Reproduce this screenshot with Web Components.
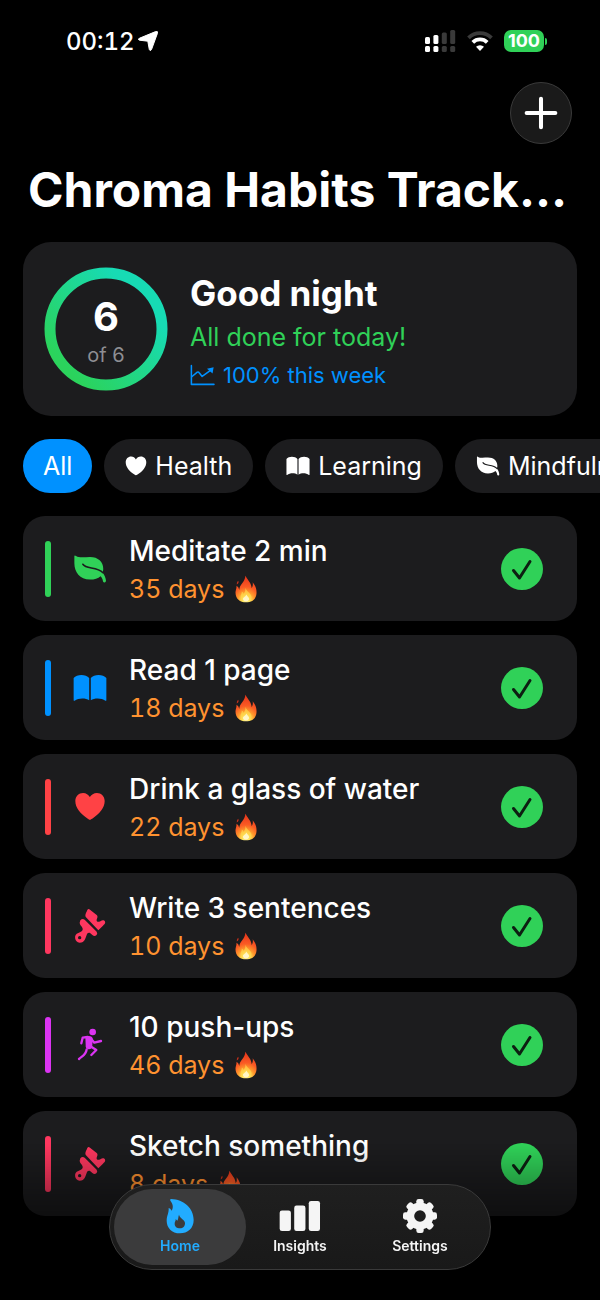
<!DOCTYPE html>
<html lang="en">
<head>
<meta charset="utf-8">
<meta name="viewport" content="width=device-width, initial-scale=1">
<title>Chroma Habits Tracker</title>
<style>
  body {
    margin: 0;
    background: #000;
    color: #fff;
    font-family: Inter, "Liberation Sans", sans-serif;
    --card: #1c1c1e;
    --green: #30d158;
    --blue: #0091ff;
    --orange: #ff9230;
  }
</style>
</head>
<body>
<habits-app>
  <status-bar slot="status" time="00:12" battery="100"></status-bar>
  <summary-card done="6" total="6">
    <span slot="greeting">Good night</span>
    <span slot="message">All done for today!</span>
    <span slot="week">100% this week</span>
  </summary-card>
  <filter-bar>
    <filter-chip active>All</filter-chip>
    <filter-chip icon="heart">Health</filter-chip>
    <filter-chip icon="book">Learning</filter-chip>
    <filter-chip icon="leaf">Mindfulness</filter-chip>
  </filter-bar>
  <habit-list>
    <habit-row icon="leaf" color="#30d158" days="35">Meditate 2 min</habit-row>
    <habit-row icon="book" color="#0091ff" days="18">Read 1 page</habit-row>
    <habit-row icon="heart" color="#ff4245" days="22">Drink a glass of water</habit-row>
    <habit-row icon="brush" color="#ff375f" days="10">Write 3 sentences</habit-row>
    <habit-row icon="runner" color="#db34f2" days="46">10 push-ups</habit-row>
    <habit-row icon="brush" color="#ff375f" days="8">Sketch something</habit-row>
  </habit-list>
  <tab-bar slot="tabs">
    <tab-item icon="flame" active>Home</tab-item>
    <tab-item icon="bars">Insights</tab-item>
    <tab-item icon="gear">Settings</tab-item>
  </tab-bar>
</habits-app>

<script>
const tooth = (a) => `<rect x="-11" y="-51" width="22" height="26" rx="7" transform="rotate(${a})"/>`;

// each icon: viewBox and content, filled with currentColor
const ICONS = {
  leaf: ["158 134 100 86", `
    <path d="M162 139C162 136 165 137 167 139C176 145 192 142 208 142C232 142 247 156 247 177C247 181 246 184 245 187C251 194 254 203 255 211C255 218 247 218 246 212C245 206 243 202 239 198C232 205 221 208 208 208C178 208 162 186 162 160Z"/>
    <path d="M187 163C197 179 228 168 246 188" fill="none" stroke="var(--card)" stroke-width="4.5" stroke-linecap="round"/>`],
  book: ["158 490 105 88", `
    <path d="M160 503C170 491 198 491 208 503V572C197 564 175 564 163 573Q160 575 160 571Z"/>
    <path d="M261 503C251 491 223 491 213 503V572C224 564 246 564 258 573Q261 575 261 571Z"/>`],
  heart: ["162 128 93 86", `
    <path d="M208 210C206 210 204 208 202 207C180 193 165 175 165 155C165 141 175 131 188 131C197 131 204 136 208 143C212 136 220 131 229 131C242 131 252 141 252 155C252 175 237 193 215 207C212 208 210 210 208 210Z"/>`],
  brush: ["8 26 98 102", `
    <path d="M45 51C40 45 46 37 49 29Q52 24 57 28L77 44C82 48 78 54 77 58C76 63 80 65 84 64C89 63 92 58 98 60Q104 62 102 69C101 72 98 74 96 76L82 90Z"/>
    <path fill-rule="evenodd" d="M28 60Q34 53 41 58L77 94Q81 100 76 105Q70 109 64 104L58 99C53 96 49 98 47 104C43 113 42 127 26 127A15 15 0 0 1 22 98C31 94 38 90 34 82C32 77 26 73 26 67ZM26 107A5 5 0 1 0 26 117A5 5 0 1 0 26 107Z"/>`],
  runner: ["170 114 80 102", `
    <circle cx="218" cy="126" r="10"/>
    <path d="M196 140Q213 134 218 144L217 166Q217 179 205 178Q196 176 197 165Z"/>
    <g fill="none" stroke="currentColor" stroke-width="7" stroke-linecap="round" stroke-linejoin="round">
      <path d="M203 141L188 143L184 160"/>
      <path d="M213 146L223 158L243 153"/>
      <path d="M210 168L229 180L214 195"/>
      <path d="M200 178C198 194 190 196 177 207"/>
    </g>`],
  flame: ["193 84 90 108", `
    <path fill-rule="evenodd" d="M211 87C250 88 279 115 279 150C279 175 261 190 238 190C213 190 198 173 198 152C198 137 205 130 204 114Q209 115 213 122C219 113 217 101 209 92Q207 87 211 87ZM235 134C232 141 234 146 230 152Q228 150 225 147C226 153 222 155 222 161C222 170 229 175 238 175C247 175 253 169 253 160C253 148 238 147 235 134Z"/>`],
  bars: ["539 94 127 97", `
    <rect x="541" y="126" width="34" height="62" rx="7"/>
    <rect x="585" y="111" width="34" height="77" rx="7"/>
    <rect x="629" y="97" width="34" height="91" rx="7"/>`],
  gear: ["-54 -54 108 108", `
    <circle r="29" fill="none" stroke="currentColor" stroke-width="23"/>
    ${[0, 45, 90, 135, 180, 225, 270, 315].map(tooth).join("")}`],
  trend: ["514 378 72 62", `
    <g fill="none" stroke="currentColor" stroke-width="4.500" stroke-linecap="round" stroke-linejoin="round">
      <path d="M518 382V436H583"/>
      <path d="M519 414L535 401Q538 399 541 403L549 413L573 396"/>
    </g>
    <path d="M563 391L582 387L579 405Z"/>`],
  plus: ["0 0 32 32", `<path d="M16 2.500V29.500M2.500 16H29.500" fill="none" stroke="currentColor" stroke-width="3.800" stroke-linecap="round"/>`],
  check: ["0 0 42 42", `
    <circle cx="21" cy="21" r="21"/>
    <path d="M12.500 22.500L18.500 30L29 13.500" fill="none" stroke="#0d1f12" stroke-width="3" stroke-linecap="round" stroke-linejoin="round"/>`],
  location: ["0 0 20 20", `<path d="M17.600 .6Q20.300 -.2 19.400 2.400L13.500 18.600Q12.400 20.800 11.300 18.500L9.800 10.200L1.500 9.200Q-.9 8.500 1.300 7.300Z" stroke="currentColor" stroke-linejoin="round"/>`],
  signal: ["0 0 31 22", `
    <rect y="7" width="5" height="7" rx="1.500"/><rect y="16" width="5" height="6" rx="1.500"/>
    <rect x="8.400" y="5" width="5" height="9" rx="1.500"/><rect x="8.400" y="16" width="5" height="6" rx="1.500"/>
    <g fill="#3a3a3a">
      <rect x="16.800" y="2.500" width="5" height="11.500" rx="1.500"/><rect x="16.800" y="16" width="5" height="6" rx="1.500"/>
      <rect x="25.200" width="5" height="14" rx="1.500"/><rect x="25.200" y="16" width="5" height="6" rx="1.500"/>
    </g>`],
  wifi: ["0 0 26 20", `
    <g fill="none" stroke-width="3.800">
      <path d="M1.500 6.800A16.500 16.500 0 0 1 24.500 6.800" stroke="#3a3a3a"/>
      <path d="M5.800 11.300A10.300 10.300 0 0 1 20.200 11.300" stroke="currentColor"/>
    </g>
    <path d="M13 20L9 15.800A5.800 5.800 0 0 1 17 15.800Z"/>`],
  fire: ["644 192 70 88", `
    <defs>
      <radialGradient id="glow" gradientUnits="userSpaceOnUse" cx="679" cy="272" r="72">
        <stop offset="0" stop-color="#fffbd0"/>
        <stop offset=".16" stop-color="#ffe95c"/>
        <stop offset=".36" stop-color="#ff9a2c"/>
        <stop offset=".6" stop-color="#fa5a24"/>
        <stop offset="1" stop-color="#e8381c"/>
      </radialGradient>
    </defs>
    <path fill="url(#glow)" d="M677 194C684 208 696 216 697 234Q702 226 700 215C709 226 713 238 712 250C711 268 697 278 679 278C660 278 646 267 646 247C646 240 650 234 649 226Q656 229 658 239C657 222 676 216 677 194Z"/>
    <path fill="#c8301c" d="M654 210Q649 216 650 222Q655 220 656 214Z"/>
    <path fill="#ffd84f" opacity=".7" d="M678 232C679 245 695 247 696 261C696 272 688 276 679 276C669 276 662 271 662 262C662 254 666 251 666 244Q670 246 672 252Q678 243 678 232Z"/>
    <path fill="#fffbe0" opacity=".8" d="M680 253C683 260 690 262 689 269Q686 275 679 275Q671 275 669 268C669 262 678 260 680 253Z"/>`]
};

class AppIcon extends HTMLElement {
  constructor() {
    super();
    this.attachShadow({ mode: "open" });
  }

  connectedCallback() {
    const [box, shapes] = ICONS[this.getAttribute("name")];
    this.shadowRoot.innerHTML = `
    <style>
      :host { display: block; flex: none; }
      svg { display: block; width: 100%; height: 100%; }
    </style>
    <svg viewBox="${box}" fill="currentColor" aria-hidden="true">${shapes}</svg>
    `;
  }
}

class StatusBar extends HTMLElement {
  constructor() {
    super();
    this.attachShadow({ mode: "open" });
  }

  connectedCallback() {
    this.shadowRoot.innerHTML = `
    <style>
      :host {
        display: flex;
        justify-content: space-between;
        align-items: center;
        height: 82px;
        padding: 0 53px 0 66px;
      }
      .time, .system { display: flex; align-items: center; }
      .time {
        gap: 3px;
        font-size: 24px;
        font-weight: 500;
        font-variant-numeric: tabular-nums;
      }
      .time app-icon { width: 20px; height: 20px; }
      .system { gap: 11px; }
      .signal { width: 31px; height: 22px; }
      .wifi { width: 26px; height: 20px; }
      .battery { display: flex; align-items: center; gap: 1px; }
      .level {
        width: 40px;
        border-radius: 7px;
        background: var(--green);
        font-size: 18px;
        font-weight: 700;
        line-height: 22px;
        text-align: center;
      }
      .nub { width: 2px; height: 7px; border-radius: 0 2px 2px 0; background: var(--green); }
    </style>
    <div class="time"><span>${this.getAttribute("time")}</span><app-icon name="location"></app-icon></div>
    <div class="system">
      <app-icon class="signal" name="signal"></app-icon>
      <app-icon class="wifi" name="wifi"></app-icon>
      <div class="battery">
        <div class="level">${this.getAttribute("battery")}</div>
        <div class="nub"></div>
      </div>
    </div>
    `;
  }
}

class SummaryCard extends HTMLElement {
  constructor() {
    super();
    this.attachShadow({ mode: "open" });
  }

  connectedCallback() {
    this.shadowRoot.innerHTML = `
    <style>
      :host {
        display: flex;
        align-items: center;
        gap: 22px;
        padding: 25px 21px;
        border-radius: 28px;
        background: var(--card);
      }
      .ring { display: grid; flex: none; width: 124px; height: 124px; }
      .ring > * { grid-area: 1 / 1; }
      .count {
        display: flex;
        flex-direction: column;
        align-items: center;
        justify-content: center;
        padding-top: 8px;
      }
      .count strong { font-size: 40px; line-height: 44px; font-weight: 700; }
      .count span { font-size: 20px; line-height: 32px; color: #8e8e93; }
      h2, p { margin: 0; }
      h2 { padding-top: 4px; font-size: 35px; line-height: 44px; font-weight: 700; }
      .message { font-size: 25px; line-height: 44px; color: var(--green); }
      .week {
        display: flex;
        align-items: center;
        gap: 8px;
        font-size: 22px;
        line-height: 32px;
        color: var(--blue);
      }
      .week app-icon { width: 25px; height: 22px; }
    </style>
    <div class="ring">
      <svg viewBox="0 0 124 124" aria-hidden="true">
        <defs>
          <linearGradient id="ring" x1="0.2" y1="0.9" x2="0.85" y2="0.3">
            <stop offset="0" stop-color="#2bd35c"/>
            <stop offset="1" stop-color="#17dbb4"/>
          </linearGradient>
        </defs>
        <circle cx="62" cy="62" r="56" fill="none" stroke="url(#ring)" stroke-width="11"/>
      </svg>
      <div class="count">
        <strong>${this.getAttribute("done")}</strong>
        <span>of ${this.getAttribute("total")}</span>
      </div>
    </div>
    <div>
      <h2><slot name="greeting"></slot></h2>
      <p class="message"><slot name="message"></slot></p>
      <p class="week"><app-icon name="trend"></app-icon><slot name="week"></slot></p>
    </div>
    `;
  }
}

class FilterBar extends HTMLElement {
  constructor() {
    super();
    this.attachShadow({ mode: "open" });
    this.shadowRoot.innerHTML = `
    <style>
      :host {
        display: flex;
        gap: 12px;
        margin: 0 -23px;
        padding: 0 23px;
        overflow: hidden;
      }
    </style>
    <slot></slot>
    `;
  }
}

class FilterChip extends HTMLElement {
  constructor() {
    super();
    this.attachShadow({ mode: "open" });
  }

  connectedCallback() {
    const icon = this.getAttribute("icon");
    this.shadowRoot.innerHTML = `
    <style>
      :host { display: block; flex: none; }
      button {
        display: flex;
        align-items: center;
        gap: 8px;
        height: 54px;
        padding: 0 20px;
        border: 0;
        border-radius: 27px;
        background: var(--card);
        color: #fff;
        font-family: inherit;
        font-size: 25px;
        font-weight: 400;
      }
      :host([icon]) button { padding: 0 21px; }
      :host([active]) button { background: var(--blue); }
      app-icon { width: 24px; height: 22px; }
      app-icon[name="heart"] { width: 22px; }
    </style>
    <button type="button">${icon ? `<app-icon name="${icon}"></app-icon>` : ""}<slot></slot></button>
    `;
  }
}

class HabitList extends HTMLElement {
  constructor() {
    super();
    this.attachShadow({ mode: "open" });
    this.shadowRoot.innerHTML = `
    <style>
      :host { display: flex; flex-direction: column; gap: 14px; }
    </style>
    <slot></slot>
    `;
  }
}

class HabitRow extends HTMLElement {
  constructor() {
    super();
    this.attachShadow({ mode: "open" });
  }

  connectedCallback() {
    this.style.setProperty("--tint", this.getAttribute("color"));
    this.shadowRoot.innerHTML = `
    <style>
      :host {
        display: flex;
        align-items: center;
        height: 105px;
        padding: 0 34px 0 22px;
        border-radius: 22px;
        box-sizing: border-box;
        background: var(--card);
      }
      .stripe { width: 6px; height: 56px; border-radius: 3px; background: var(--tint); }
      .icon { width: 34px; height: 34px; margin: 0 22px; color: var(--tint); }
      .icon[name="heart"] { height: 29px; }
      .text { flex: 1; }
      h3, p { margin: 0; }
      h3 { padding-top: 2px; font-size: 28px; line-height: 38px; font-weight: 500; }
      p {
        display: flex;
        align-items: center;
        gap: 10px;
        font-size: 25px;
        line-height: 38px;
        font-variant-numeric: tabular-nums;
        color: var(--orange);
      }
      .fire { width: 24px; height: 28px; }
      button {
        padding: 0;
        border: 0;
        background: none;
        color: var(--green);
      }
      button app-icon { width: 42px; height: 42px; }
    </style>
    <div class="stripe"></div>
    <app-icon class="icon" name="${this.getAttribute("icon")}"></app-icon>
    <div class="text">
      <h3><slot></slot></h3>
      <p><span>${this.getAttribute("days")} days</span><app-icon class="fire" name="fire"></app-icon></p>
    </div>
    <button type="button" aria-label="Completed" aria-pressed="true"><app-icon name="check"></app-icon></button>
    `;
  }
}

class TabBar extends HTMLElement {
  constructor() {
    super();
    this.attachShadow({ mode: "open" });
    this.shadowRoot.innerHTML = `
    <style>
      /* floats over the list, which fades out beneath it */
      :host {
        position: fixed;
        left: 0;
        right: 0;
        bottom: 0;
        display: flex;
        justify-content: center;
        padding: 40px 0 30px;
        background: linear-gradient(transparent, rgba(0, 0, 0, .5) 50%);
      }
      nav {
        display: flex;
        padding: 4px;
        border: 1px solid #3a3a3a;
        border-radius: 43px;
        background: linear-gradient(#1f1f1f, #191919);
      }
    </style>
    <nav><slot></slot></nav>
    `;
  }
}

class TabItem extends HTMLElement {
  constructor() {
    super();
    this.attachShadow({ mode: "open" });
  }

  connectedCallback() {
    this.shadowRoot.innerHTML = `
    <style>
      :host { display: block; width: 132px; }
      :host(:not(:first-child)) { margin-left: -12px; }
      button {
        display: flex;
        flex-direction: column;
        align-items: center;
        justify-content: center;
        gap: 2px;
        width: 100%;
        height: 76px;
        padding: 0;
        border: 0;
        border-radius: 38px;
        background: none;
        color: #f5f5f5;
        font-family: inherit;
        font-size: 14px;
        font-weight: 600;
        line-height: 20px;
      }
      :host([active]) button { background: #3b3b3c; color: #22acff; }
      app-icon { width: 42px; height: 36px; }
    </style>
    <button type="button"><app-icon name="${this.getAttribute("icon")}"></app-icon><slot></slot></button>
    `;
  }
}

class HabitsApp extends HTMLElement {
  constructor() {
    super();
    this.attachShadow({ mode: "open" });
    this.shadowRoot.innerHTML = `
    <style>
      :host { display: block; }
      header { padding: 0 28px; }
      .actions { display: flex; justify-content: flex-end; }
      .actions button {
        display: grid;
        place-items: center;
        width: 62px;
        height: 62px;
        padding: 0;
        border: 1px solid #3a3a3a;
        border-radius: 50%;
        background: #1a1a1a;
        color: #fff;
      }
      .actions app-icon { width: 34px; height: 34px; }
      h1 {
        margin: 0;
        padding: 14px 0 20px;
        overflow: hidden;
        text-overflow: ellipsis;
        white-space: nowrap;
        font-size: 48px;
        line-height: 64px;
        font-weight: 700;
      }
      main {
        display: flex;
        flex-direction: column;
        gap: 23px;
        padding: 0 23px 84px;
      }
    </style>
    <slot name="status"></slot>
    <header>
      <div class="actions">
        <button type="button" aria-label="Add habit"><app-icon name="plus"></app-icon></button>
      </div>
      <h1>Chroma Habits Track…</h1>
    </header>
    <main><slot></slot></main>
    <slot name="tabs"></slot>
    `;
  }
}

customElements.define("app-icon", AppIcon);
customElements.define("status-bar", StatusBar);
customElements.define("summary-card", SummaryCard);
customElements.define("filter-bar", FilterBar);
customElements.define("filter-chip", FilterChip);
customElements.define("habit-list", HabitList);
customElements.define("habit-row", HabitRow);
customElements.define("tab-bar", TabBar);
customElements.define("tab-item", TabItem);
customElements.define("habits-app", HabitsApp);
</script>
</body>
</html>
